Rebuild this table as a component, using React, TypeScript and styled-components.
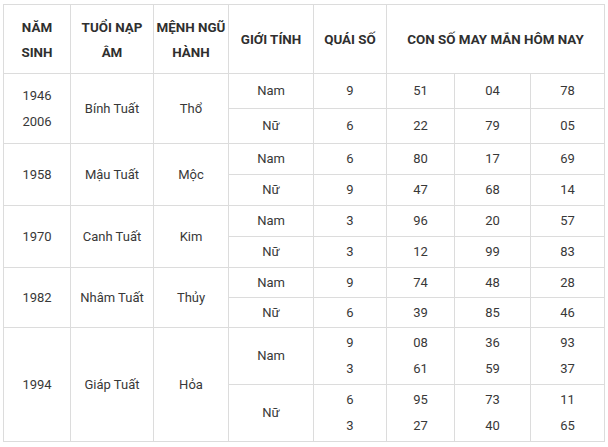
import React from "react";
import styled, {createGlobalStyle} from "styled-components";

const GlobalStyle = createGlobalStyle`
  body {
    margin: 0;
    background: #ffffff;
    font-family: Roboto, "Liberation Sans", sans-serif;
  }
`

const Page = styled.div`
  padding: 4px 0 0 3px;
`

const Table = styled.table`
  border-collapse: collapse;
  table-layout: fixed;
  width: 601px;
  font-size: 13px;
  color: #383838;
`

const Col = styled.col<{w: number}>`
  width: ${props => props.w}px;
`

const HeadCell = styled.th`
  border: 1px solid #dcdcdc;
  font-size: 13.4px;
  font-weight: 700;
  color: #2f2f2f;
  line-height: 25px;
  text-align: center;
  vertical-align: middle;
  padding: 1px 0 0;
`

const Row = styled.tr<{h: number}>`
  height: ${props => props.h}px;
`

const Cell = styled.td`
  border: 1px solid #dcdcdc;
  line-height: 26px;
  text-align: center;
  vertical-align: middle;
  padding: 0;
`

type Gender = {
    label: string;
    quai: string[];
    nums: string[][];
    h: number;
};

type Group = {
    years: string[];
    tuoi: string;
    menh: string;
    rows: Gender[];
};

const widths = [67, 83, 75, 85, 73, 68, 76, 74];

const data: Group[] = [
    {years: ["1946", "2006"], tuoi: "Bính Tuất", menh: "Thổ", rows: [
        {label: "Nam", quai: ["9"], nums: [["51", "04", "78"]], h: 35},
        {label: "Nữ", quai: ["6"], nums: [["22", "79", "05"]], h: 35},
    ]},
    {years: ["1958"], tuoi: "Mậu Tuất", menh: "Mộc", rows: [
        {label: "Nam", quai: ["6"], nums: [["80", "17", "69"]], h: 31},
        {label: "Nữ", quai: ["9"], nums: [["47", "68", "14"]], h: 31},
    ]},
    {years: ["1970"], tuoi: "Canh Tuất", menh: "Kim", rows: [
        {label: "Nam", quai: ["3"], nums: [["96", "20", "57"]], h: 31},
        {label: "Nữ", quai: ["3"], nums: [["12", "99", "83"]], h: 31},
    ]},
    {years: ["1982"], tuoi: "Nhâm Tuất", menh: "Thủy", rows: [
        {label: "Nam", quai: ["9"], nums: [["74", "48", "28"]], h: 30},
        {label: "Nữ", quai: ["6"], nums: [["39", "85", "46"]], h: 30},
    ]},
    {years: ["1994"], tuoi: "Giáp Tuất", menh: "Hỏa", rows: [
        {label: "Nam", quai: ["9", "3"], nums: [["08", "36", "93"], ["61", "59", "37"]], h: 57},
        {label: "Nữ", quai: ["6", "3"], nums: [["95", "73", "11"], ["27", "40", "65"]], h: 57},
    ]},
];

const Lines: React.FC<{items: string[]}> = ({items}) => (
    <>
        {items.map((t, i) => (
            <React.Fragment key={i}>
                {i > 0 && <br/>}
                {t}
            </React.Fragment>
        ))}
    </>
)

const App: React.FC = () => {
    return (
        <Page>
            <GlobalStyle/>
            <Table>
                <colgroup>
                    {widths.map((w, i) => <Col key={i} w={w}/>)}
                </colgroup>
                <thead>
                    <Row h={69}>
                        <HeadCell>NĂM<br/>SINH</HeadCell>
                        <HeadCell>TUỔI NẠP<br/>ÂM</HeadCell>
                        <HeadCell>MỆNH NGŨ<br/>HÀNH</HeadCell>
                        <HeadCell>GIỚI TÍNH</HeadCell>
                        <HeadCell>QUÁI SỐ</HeadCell>
                        <HeadCell colSpan={3}>CON SỐ MAY MẮN HÔM NAY</HeadCell>
                    </Row>
                </thead>
                <tbody>
                    {data.map(group => group.rows.map((r, i) => (
                        <Row key={group.tuoi + r.label} h={r.h}>
                            {i === 0 && <Cell rowSpan={2}><Lines items={group.years}/></Cell>}
                            {i === 0 && <Cell rowSpan={2}>{group.tuoi}</Cell>}
                            {i === 0 && <Cell rowSpan={2}>{group.menh}</Cell>}
                            <Cell>{r.label}</Cell>
                            <Cell><Lines items={r.quai}/></Cell>
                            {[0, 1, 2].map(c => (
                                <Cell key={c}><Lines items={r.nums.map(n => n[c])}/></Cell>
                            ))}
                        </Row>
                    )))}
                </tbody>
            </Table>
        </Page>
    )
}

export default App;
